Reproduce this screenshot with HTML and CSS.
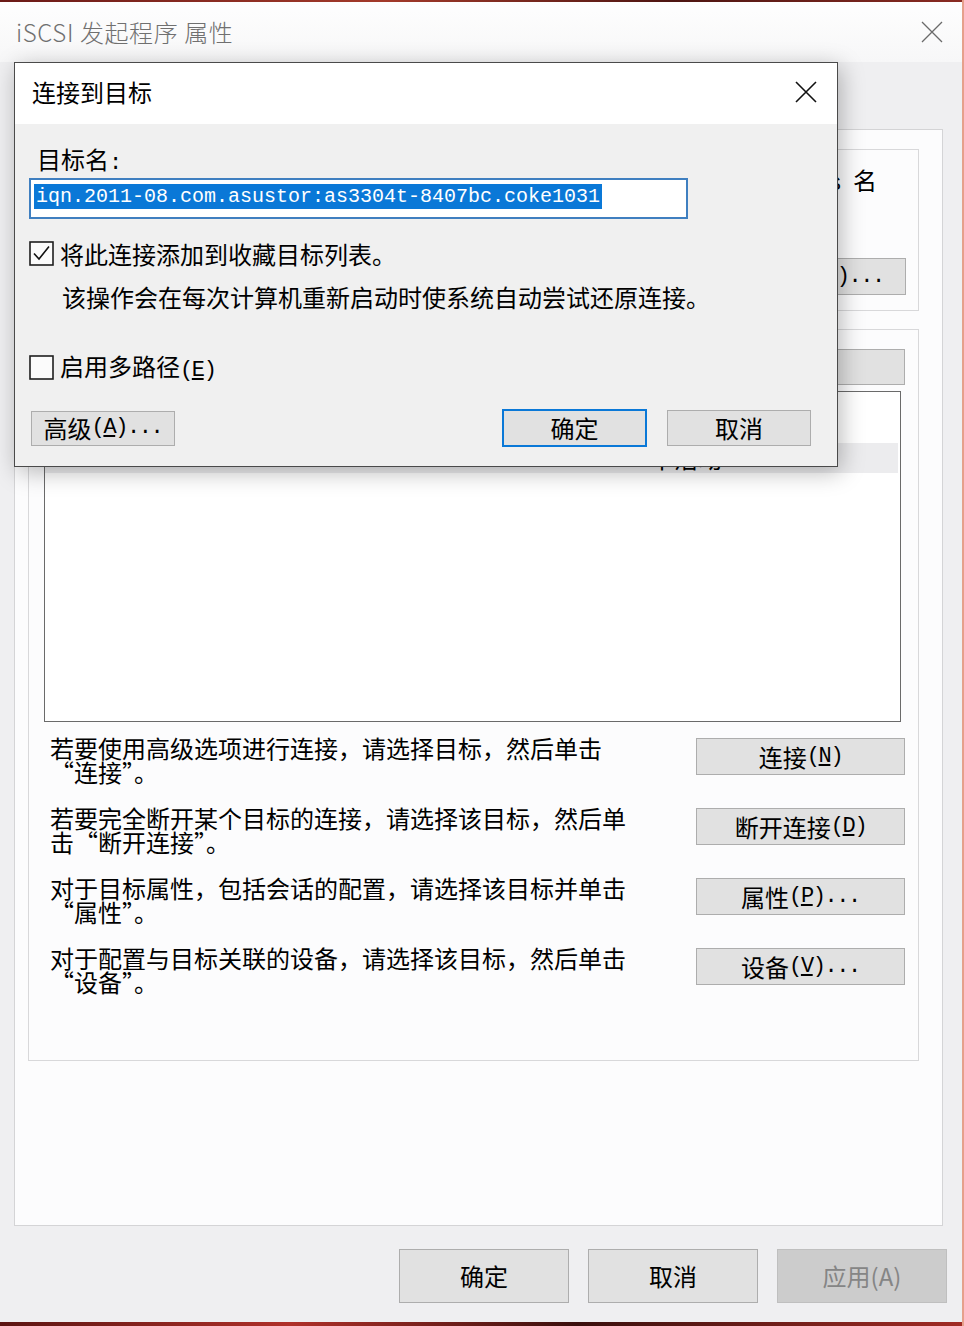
FILE: index.html
```html
<!DOCTYPE html>
<html lang="zh-CN">
<head>
<meta charset="utf-8">
<title>iSCSI 发起程序 属性</title>
<link rel="stylesheet" href="styles.css">
</head>
<body>
<div class="win">
  <div class="topstrip"></div>
  <div class="titlebar">
    <span class="wtitle">iSCSI 发起程序 属性</span>
    <svg class="wclose" width="22" height="22" viewBox="0 0 22 22"><path d="M1 1L21 21M21 1L1 21" stroke="#6a6a6a" stroke-width="1.3" fill="none"/></svg>
  </div>
  <div class="tabs"></div>
  <div class="panel">
    <div class="group g1">
      <p class="g1text">若要发现目标并使用基本连接登录到目标，请键入该目标的 IP 地址或 <span class="mono">DNS </span>名</p>
      <p class="g1text2">称，然后单击“快速连接”。</p>
      <div class="g1row">
        <span>目标<span class="mono">(T):</span></span>
        <span class="g1input"></span>
        <span class="btn btn-g">快速连接<span class="mono">(Q)...</span></span>
      </div>
    </div>
    <div class="group g2">
      <div class="g2head">
        <span>已发现的目标<span class="mono">(G)</span></span>
        <span class="btn btn-g btn-refresh">刷新<span class="mono">(R)</span></span>
      </div>
      <div class="list">
        <div class="lhead"><span class="c1">名称</span><span class="c2">状态</span></div>
        <div class="lrow"><span class="c1 mono">iqn.2011-08.com.asustor:as3304t-8407bc.coke1031</span><span class="c2">不活动</span></div>
      </div>
      <div class="rows">
        <div class="row">
          <p class="rtext">若要使用高级选项进行连接，请选择目标，然后单击<br>“连接”。</p>
          <span class="btn btn-r">连接<span class="mono">(<u>N</u>)</span></span>
        </div>
        <div class="row">
          <p class="rtext">若要完全断开某个目标的连接，请选择该目标，然后单<br>击“断开连接”。</p>
          <span class="btn btn-r">断开连接<span class="mono">(<u>D</u>)</span></span>
        </div>
        <div class="row">
          <p class="rtext">对于目标属性，包括会话的配置，请选择该目标并单击<br>“属性”。</p>
          <span class="btn btn-r">属性<span class="mono">(<u>P</u>)...</span></span>
        </div>
        <div class="row">
          <p class="rtext">对于配置与目标关联的设备，请选择该目标，然后单击<br>“设备”。</p>
          <span class="btn btn-r">设备<span class="mono">(<u>V</u>)...</span></span>
        </div>
      </div>
    </div>
  </div>
  <div class="footer">
    <span class="btn btn-f">确定</span>
    <span class="btn btn-f">取消</span>
    <span class="btn btn-f disabled">应用(A)</span>
  </div>
  <div class="bottomstrip"></div>

  <div class="dialog">
    <div class="dtitle">
      <span>连接到目标</span>
      <svg class="dclose" width="24" height="24" viewBox="0 0 24 24"><path d="M2 2L22 22M22 2L2 22" stroke="#111" stroke-width="1.6" fill="none"/></svg>
    </div>
    <div class="dbody">
      <div class="dlabel">目标名<span class="mono">:</span></div>
      <div class="dinput"><span class="sel mono">iqn.2011-08.com.asustor:as3304t-8407bc.coke1031</span></div>
      <div class="cbrow">
        <svg class="cb" width="25" height="25" viewBox="0 0 25 25"><rect x="1" y="1" width="23" height="23" fill="#fbfbfb" stroke="#1e1e1e" stroke-width="1.6"/><path d="M5 12.5L10 18L20 5.5" stroke="#111" stroke-width="1.6" fill="none"/></svg>
        <span>将此连接添加到收藏目标列表。</span>
      </div>
      <div class="ddesc">该操作会在每次计算机重新启动时使系统自动尝试还原连接。</div>
      <div class="cbrow cb2">
        <svg class="cb" width="25" height="25" viewBox="0 0 25 25"><rect x="1" y="1" width="23" height="23" fill="#fbfbfb" stroke="#1e1e1e" stroke-width="1.6"/></svg>
        <span>启用多路径<span class="mono">(<u>E</u>)</span></span>
      </div>
      <div class="dbtns">
        <span class="btn btn-adv">高级<span class="mono">(<u>A</u>)...</span></span>
        <span class="btn btn-ok">确定</span>
        <span class="btn btn-cancel">取消</span>
      </div>
    </div>
  </div>
</div>
</body>
</html>
```

FILE: styles.css
```css
* { box-sizing: border-box; }
html, body { margin: 0; padding: 0; }
body {
  width: 964px;
  height: 1326px;
  overflow: hidden;
  font-family: "Noto Sans CJK SC", "Noto Sans", sans-serif;
  font-size: 24px;
  line-height: 24px;
  color: #000;
  background: #efeff1;
}
p { margin: 0; }
.mono {
  font-family: "Liberation Mono", "DejaVu Sans Mono", monospace;
  font-size: 22px;
  letter-spacing: -1.4px;
  line-height: 20px;
}
u { text-decoration-thickness: 1.5px; text-underline-offset: 2px; }

.win {
  position: relative;
  width: 964px;
  height: 1326px;
  background: #efeff1;
  display: flex;
  flex-direction: column;
  border-right: 2px solid #e6a08c;
}
.topstrip { height: 2px; background: linear-gradient(90deg, #6b1a17, #a33a2a 40%, #4d1511 70%, #8a2b22); }
.bottomstrip { margin-top: auto; height: 4px; background: linear-gradient(90deg, #5b1412, #b0302a 30%, #3a0f0d 60%, #a12b25); }

.titlebar {
  height: 60px;
  background: linear-gradient(#fefefe, #f7f7f8);
  display: flex;
  align-items: center;
  justify-content: space-between;
  padding: 0 19px 0 16px;
}
.wtitle { font-size: 24px; color: #707070; font-weight: 300; letter-spacing: 0.6px; }
.tabs { height: 67px; }

.panel {
  margin-left: 14px;
  width: 929px;
  height: 1097px;
  background: #fcfcfd;
  border: 1px solid #d4d4d6;
  padding: 19px 23px 0 13px;
  display: flex;
  flex-direction: column;
  gap: 18px;
}
.group { border: 1px solid #d8d8da; }
.g1 { height: 162px; padding: 18px 12px 0 14px; overflow: hidden; }
.g1text { height: 24px; white-space: nowrap; text-align: right; padding-right: 29px; overflow: hidden; direction: rtl; unicode-bidi: plaintext; }
.g1text .mono { font-size: 20px; letter-spacing: 0; }
.g1text2 { height: 24px; white-space: nowrap; }
.g1row { margin-top: 42px; display: flex; align-items: center; gap: 10px; }
.g1input { flex: 1; height: 37px; background: #fff; border: 1px solid #7a7a7a; }

.btn {
  display: inline-flex;
  align-items: center;
  justify-content: center;
  background: #e1e1e1;
  border: 1px solid #adadad;
  white-space: nowrap;
}
.btn-g { width: 211px; height: 37px; }
.btn-refresh { padding-right: 6px; }

.g2 { height: 732px; padding: 19px 13px 0 15px; }
.g2head { display: flex; justify-content: space-between; align-items: center; height: 36px; }
.g2head .btn { width: 210px; height: 36px; }
.list {
  margin: 6px 4px 0 0;
  height: 331px;
  border: 1px solid #6a6a6a;
  background: #fff;
}
.lhead { height: 51px; display: flex; align-items: center; }
.lrow { height: 30px; background: #ececee; display: flex; align-items: center; margin-right: 2px; }
.c1 { width: 605px; padding-left: 20px; }
.lrow .c1.mono { font-size: 20px; letter-spacing: 0; line-height: 24px; }
.c2 { flex: 1; }

.rows { margin-top: 14px; padding-left: 6px; display: flex; flex-direction: column; gap: 22px; }
.row { display: flex; justify-content: space-between; align-items: flex-start; }
.rtext { white-space: nowrap; line-height: 24px; height: 48px; font-feature-settings: "fwid"; }
.btn-r { width: 209px; height: 37px; margin-top: 2px; }

.footer { margin-top: 23px; display: flex; justify-content: flex-end; gap: 19px; padding-right: 15px; }
.btn-f { width: 170px; height: 54px; }
.btn-f.disabled { background: #cccccc; border-color: #bfbfbf; color: #858585; }

/* overlay dialog */
.dialog {
  position: absolute;
  left: 14px;
  top: 62px;
  width: 824px;
  height: 405px;
  border: 1px solid #4a4a4a;
  background: #f0f0f0;
  box-shadow: 3px 5px 22px rgba(0, 0, 0, 0.28);
  display: flex;
  flex-direction: column;
}
.dtitle {
  height: 61px;
  background: #fff;
  display: flex;
  align-items: center;
  justify-content: space-between;
  padding: 0 19px 4px 17px;
}
.dbody { flex: 1; padding: 0 14px; display: flex; flex-direction: column; align-items: flex-start; }
.dlabel { margin-top: 23px; padding-left: 8px; height: 24px; }
.dinput {
  margin-top: 7px;
  width: 659px;
  height: 41px;
  border: 2px solid #3f7fc0;
  background: #fff;
  padding: 4px 0 0 3px;
}
.sel { display: inline-block; background: #0a78d7; color: #fff; font-size: 20px; letter-spacing: 0; line-height: 25px; height: 25px; padding: 0 2px; vertical-align: top; }
.cbrow { display: flex; align-items: center; gap: 6px; margin-top: 22px; height: 25px; }
.cb { flex: none; }
.ddesc { margin-top: 19px; padding-left: 33px; height: 24px; }
.cb2 { margin-top: 46px; }
.dbtns { margin-top: 29px; width: 100%; display: flex; align-items: center; padding: 0 12px 0 2px; }
.btn-adv { width: 144px; height: 35px; }
.btn-ok { margin-left: auto; width: 145px; height: 38px; border: 2px solid #0a78d7; }
.btn-cancel { margin-left: 20px; width: 144px; height: 36px; }
```
